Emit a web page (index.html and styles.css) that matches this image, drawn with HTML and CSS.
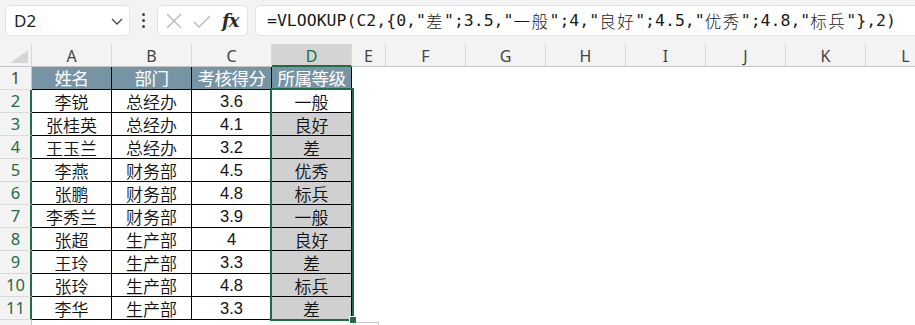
FILE: index.html
```html
<!DOCTYPE html>
<html lang="zh">
<head>
<meta charset="utf-8">
<link rel="stylesheet" href="styles.css">
</head>
<body>
<div class="fbar">
  <div class="namebox">
    <span class="nb-text">D2</span>
    <svg class="chev" width="12" height="7" viewBox="0 0 12 7"><path d="M1 1 L6 6 L11 1" fill="none" stroke="#444" stroke-width="1.3"/></svg>
  </div>
  <div class="dots"><i></i><i></i><i></i></div>
  <div class="fxbox">
    <svg class="ic-x" width="16" height="16" viewBox="0 0 16 16"><path d="M1 1 L15 15 M15 1 L1 15" stroke="#b9b9b9" stroke-width="1.4" fill="none"/></svg>
    <svg class="ic-ok" width="18" height="13" viewBox="0 0 18 13"><path d="M1 7 L6 12 L17 1" stroke="#b9b9b9" stroke-width="1.4" fill="none"/></svg>
    <span class="fx">fx</span>
  </div>
  <div class="formula">=VLOOKUP(C2,{0,"<span class="cj">差</span>";3.5,"<span class="cj">一般</span>";4,"<span class="cj">良好</span>";4.5,"<span class="cj">优秀</span>";4.8,"<span class="cj">标兵</span>"},2)</div>
</div>

<div class="sheet">
  <div class="corner"><svg width="32" height="22" viewBox="0 0 32 22"><polygon points="10,19 28,19 28,6" fill="#d6d6d6"/></svg></div>
  <div class="ch">A</div><div class="ch">B</div><div class="ch">C</div><div class="ch ch-sel">D</div>
  <div class="ch ch-e">E</div><div class="ch">F</div><div class="ch">G</div><div class="ch">H</div><div class="ch">I</div><div class="ch">J</div><div class="ch">K</div><div class="ch">L</div>

  <div class="rh">1</div>
  <div class="c hd first">姓名</div><div class="c hd">部门</div><div class="c hd">考核得分</div><div class="c hd">所属等级</div>

  <div class="rh sel">2</div>
  <div class="c first">李锐</div><div class="c">总经办</div><div class="c num">3.6</div><div class="c">一般</div>
  <div class="rh sel">3</div>
  <div class="c first">张桂英</div><div class="c">总经办</div><div class="c num">4.1</div><div class="c g">良好</div>
  <div class="rh sel">4</div>
  <div class="c first">王玉兰</div><div class="c">总经办</div><div class="c num">3.2</div><div class="c g">差</div>
  <div class="rh sel">5</div>
  <div class="c first">李燕</div><div class="c">财务部</div><div class="c num">4.5</div><div class="c g">优秀</div>
  <div class="rh sel">6</div>
  <div class="c first">张鹏</div><div class="c">财务部</div><div class="c num">4.8</div><div class="c g">标兵</div>
  <div class="rh sel">7</div>
  <div class="c first">李秀兰</div><div class="c">财务部</div><div class="c num">3.9</div><div class="c g">一般</div>
  <div class="rh sel">8</div>
  <div class="c first">张超</div><div class="c">生产部</div><div class="c num">4</div><div class="c g">良好</div>
  <div class="rh sel">9</div>
  <div class="c first">王玲</div><div class="c">生产部</div><div class="c num">3.3</div><div class="c g">差</div>
  <div class="rh sel">10</div>
  <div class="c first">张玲</div><div class="c">生产部</div><div class="c num">4.8</div><div class="c g">标兵</div>
  <div class="rh sel">11</div>
  <div class="c first">李华</div><div class="c">生产部</div><div class="c num">3.3</div><div class="c g">差</div>
  <div class="rh"></div>

  <div class="selection"><span class="handle"></span></div>
  <div class="qa"></div>
</div>
</body>
</html>
```

FILE: styles.css
```css
* { box-sizing: border-box; }

html, body {
  margin: 0;
  padding: 0;
}

body {
  width: 915px;
  height: 325px;
  overflow: hidden;
  background: #f3f3f3;
  font-family: "Noto Sans", "Noto Sans CJK SC", sans-serif;
  color: #1f1f1f;
}

/* formula bar */
.fbar {
  display: flex;
  align-items: flex-start;
  height: 44px;
  padding: 5px 0 0 5px;
  overflow: hidden;
}

.namebox {
  width: 125px;
  height: 31px;
  flex: none;
  background: #fff;
  border: 1px solid #e2e2e2;
  border-radius: 5px;
  display: flex;
  align-items: center;
  justify-content: space-between;
  padding: 0 6px 0 8px;
}

.nb-text {
  font-family: "Noto Sans", sans-serif;
  font-size: 17px;
  color: #222;
  line-height: 1;
}

.chev { display: block; margin-top: 2px; }

.dots {
  width: 27px;
  height: 31px;
  flex: none;
  display: flex;
  flex-direction: column;
  align-items: center;
  justify-content: center;
  gap: 3px;
}

.dots i {
  display: block;
  width: 3px;
  height: 3px;
  background: #444;
  border-radius: 50%;
}

.fxbox {
  width: 91px;
  height: 31px;
  flex: none;
  background: #fff;
  border: 1px solid #e2e2e2;
  border-radius: 5px;
  display: flex;
  align-items: center;
  padding: 0 0 0 8px;
}

.ic-x { display: block; margin-right: 11px; }
.ic-ok { display: block; margin-right: 11px; margin-top: 1px; }

.fx {
  font-family: "DejaVu Serif", "Liberation Serif", serif;
  font-style: italic;
  font-weight: bold;
  font-size: 18px;
  color: #2b2b2b;
  letter-spacing: -1px;
  line-height: 1;
}

.formula {
  margin-left: 7px;
  flex: none;
  width: 700px;
  height: 31px;
  background: #fff;
  border: 1px solid #e2e2e2;
  border-radius: 5px;
  padding: 0 0 0 11px;
  display: flex;
  align-items: center;
  white-space: pre;
  font-family: "DejaVu Sans Mono", "Noto Sans CJK SC", monospace;
  font-size: 16.5px;
  color: #1a1a1a;
}

.cj {
  font-family: "Noto Sans CJK SC", sans-serif;
  font-weight: 300;
  letter-spacing: 1.5px;
}

/* sheet */
.sheet {
  position: relative;
  display: grid;
  grid-template-columns: 32px 80px 80px 80px 80px 34px repeat(7, 80px);
  grid-template-rows: 23px repeat(12, 23px);
  background: #fff;
  width: 1000px;
}

.corner {
  background: #f3f3f3;
  border-bottom: 1px solid #c4c4c4;
  border-right: 1px solid #d8d8d8;
}

.corner svg { display: block; }

.ch {
  background: #f3f3f3;
  border-bottom: 1px solid #c4c4c4;
  border-right: 1px solid #d9d9d9;
  font-family: "Noto Sans", sans-serif;
  font-size: 16px;
  color: #444;
  display: flex;
  align-items: center;
  justify-content: center;
  line-height: 1;
  padding-top: 1px;
}

.ch-sel {
  background: #d4d4d4;
  color: #1e6e43;
  border-bottom: 2px solid #1e6e43;
  padding-top: 2px;
}

.rh {
  grid-column: 1;
  background: #f3f3f3;
  border-right: 1px solid #c4c4c4;
  border-bottom: 1px solid #d9d9d9;
  font-family: "Noto Sans", sans-serif;
  font-size: 16.5px;
  color: #444;
  display: flex;
  align-items: center;
  justify-content: center;
  line-height: 1;
}

.rh.sel {
  color: #1e6e43;
  border-right: 2px solid #1e6e43;
  padding-left: 1px;
}

.c {
  border-right: 1px solid #000;
  border-bottom: 1px solid #000;
  display: flex;
  align-items: center;
  justify-content: center;
  font-family: "Noto Sans CJK SC", sans-serif;
  font-size: 17px;
  font-weight: 350;
  line-height: 1;
  color: #111;
  white-space: nowrap;
}

.c.num {
  font-family: "Liberation Sans", "Noto Sans", sans-serif;
  font-weight: 400;
  font-size: 16.5px;
}

.c.hd {
  background: #7794a5;
  color: #fff;
  font-weight: 400;
  font-size: 17.5px;
  letter-spacing: -0.5px;
}

.c.g { background: #d0d0d0; }

.selection {
  position: absolute;
  grid-column: 5 / 6;
  grid-row: 3 / 13;
  top: -2px;
  left: -2px;
  right: -2px;
  bottom: -1px;
  border: 2px solid #1e6e43;
  z-index: 2;
  pointer-events: none;
}

.handle {
  position: absolute;
  right: -5px;
  bottom: -5px;
  width: 8px;
  height: 8px;
  background: #1e6e43;
  border: 1px solid #fff;
}

.qa {
  position: absolute;
  grid-column: 5 / 7;
  grid-row: 13 / 14;
  top: 2px;
  left: 81px;
  width: 26px;
  height: 20px;
  border: 1px solid #c8c8c8;
  background: #fff;
}
```
